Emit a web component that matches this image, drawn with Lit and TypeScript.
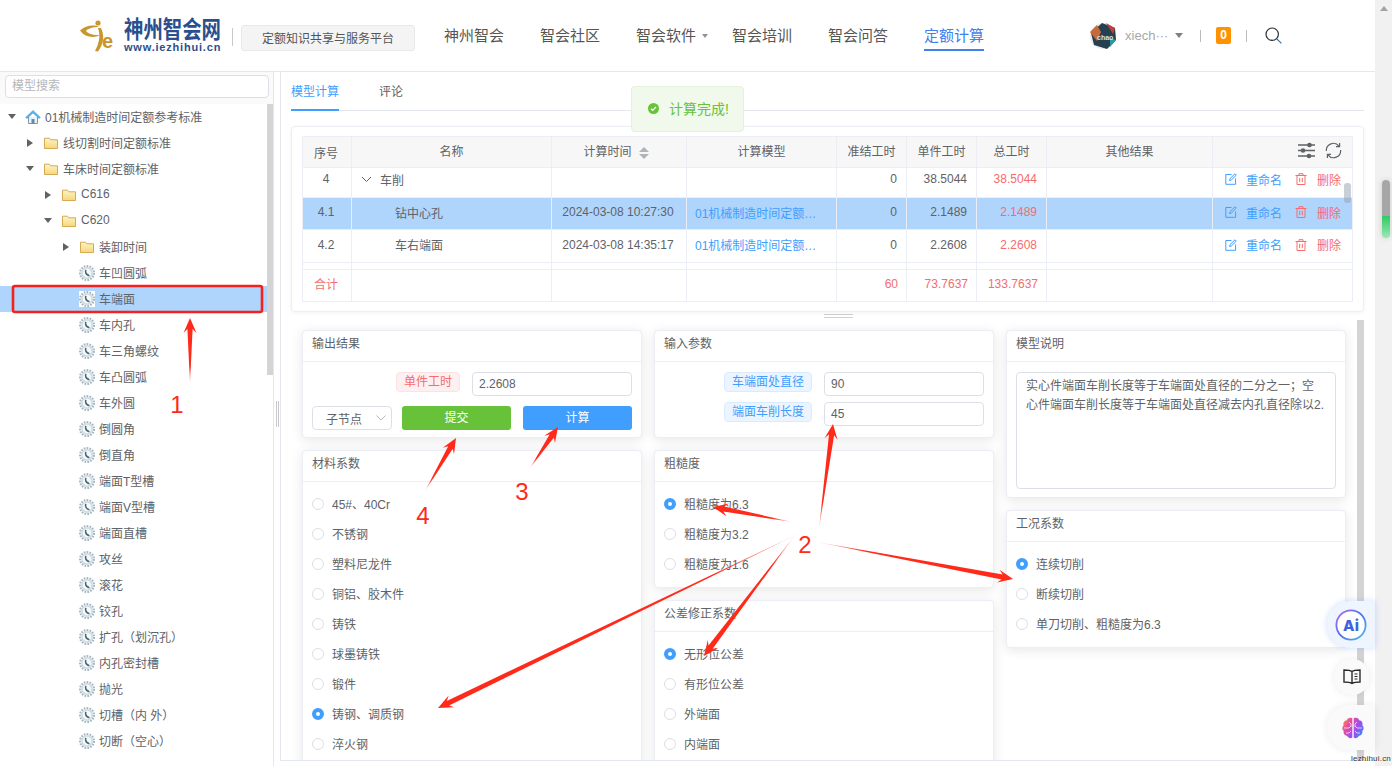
import { LitElement, html, css, svg } from "lit";
import { customElement } from "lit/decorators.js";

type Node = { l: number; t: "home" | "folder" | "model"; a?: "open" | "closed"; n: string; sel?: boolean };

const TREE: Node[] = [
  { l: 0, t: "home", a: "open", n: "01机械制造时间定额参考标准" },
  { l: 1, t: "folder", a: "closed", n: "线切割时间定额标准" },
  { l: 1, t: "folder", a: "open", n: "车床时间定额标准" },
  { l: 2, t: "folder", a: "closed", n: "C616" },
  { l: 2, t: "folder", a: "open", n: "C620" },
  { l: 3, t: "folder", a: "closed", n: "装卸时间" },
  ...[
    "车凹圆弧", "车端面", "车内孔", "车三角螺纹", "车凸圆弧", "车外圆", "倒圆角", "倒直角", "端面T型槽", "端面V型槽",
    "端面直槽", "攻丝", "滚花", "铰孔", "扩孔（划沉孔）", "内孔密封槽", "抛光", "切槽（内 外）", "切断（空心）",
  ].map((n) => ({ l: 3, t: "model" as const, n, sel: n === "车端面" })),
];

const MATERIAL = ["45#、40Cr", "不锈钢", "塑料尼龙件", "铜铝、胶木件", "铸铁", "球墨铸铁", "锻件", "铸钢、调质钢", "淬火钢"];
const ROUGH = ["粗糙度为6.3", "粗糙度为3.2", "粗糙度为1.6"];
const TOL = ["无形位公差", "有形位公差", "外端面", "内端面"];
const WORK = ["连续切削", "断续切削", "单刀切削、粗糙度为6.3"];

const ARROWS: [number, number, number, number][] = [
  [190, 384, 190, 318],
  [792, 522, 713, 507],
  [819, 529, 833, 424],
  [817, 542, 1013, 579],
  [795, 535, 704, 656],
  [802, 532, 438, 708],
  [530, 468, 558, 427],
  [425, 491, 456, 438],
];

function arrowPoints(x1: number, y1: number, x2: number, y2: number) {
  const dx = x2 - x1, dy = y2 - y1;
  const len = Math.hypot(dx, dy);
  const ux = dx / len, uy = dy / len, px = -uy, py = ux;
  const at = (d: number, w: number) => `${(x1 + ux * d + px * w).toFixed(1)},${(y1 + uy * d + py * w).toFixed(1)}`;
  const h = 13, sw = 2.6, hw = 6.5;
  return [at(0, 0), at(len - h + 2, sw), at(len - h - 2, hw), at(len, 0), at(len - h - 2, -hw), at(len - h + 2, -sw)].join(" ");
}

const modelIcon = html`<svg class="ic" viewBox="0 0 16 16">
  <circle cx="8" cy="8" r="6.9" fill="none" stroke="#a3b6c2" stroke-width="2.2" stroke-dasharray="1.7 1.2" />
  <circle cx="8" cy="8" r="6" fill="#cfdce3" />
  <circle cx="8" cy="8" r="4.3" fill="#f6f9fa" />
  <path d="M6.8 4.9c-.7 2.4.4 4.8 3.6 5.8" fill="none" stroke="#4b6375" stroke-width="1.5" />
</svg>`;

const folderIcon = html`<svg class="ic" viewBox="0 0 16 16">
  <defs><linearGradient id="fg" x1="0" y1="0" x2="0" y2="1"><stop offset="0" stop-color="#fdf4c4" /><stop offset="1" stop-color="#f5d77c" /></linearGradient></defs>
  <path d="M1.5 13.5V3.2h5l1.3 1.6h6.7v8.7z" fill="url(#fg)" stroke="#d6aa55" stroke-width="1" />
</svg>`;

const homeIcon = html`<svg class="ic" viewBox="0 0 16 16">
  <path d="M3.5 8v6.5h9V8" fill="#e8f3fb" stroke="#7d98ad" stroke-width="1" />
  <rect x="6.5" y="10" width="3" height="4.5" fill="#6b8aa0" />
  <path d="M.6 8.4 8 1.4l7.4 7-1.4 1L8 4 2 9.4z" fill="#5cb2ec" stroke="#3f96d6" stroke-width=".5" />
</svg>`;

const editIcon = html`<svg class="act" viewBox="0 0 12 12" fill="none" stroke="currentColor" stroke-width="1">
  <path d="M6.5 1.5H.8v9.8h9.8V5.5" /><path d="M4.6 7.5 5 5.6 10 .8l1.3 1.3-5 4.9z" />
</svg>`;
const trashIcon = html`<svg class="act" viewBox="0 0 12 12" fill="none" stroke="currentColor" stroke-width="1">
  <path d="M.5 2.5h11M4 2.5V.7h4v1.8M2 2.5v9h8v-9M4.7 4.8v4.4M7.3 4.8v4.4" />
</svg>`;

const radio = (label: string, on: boolean) => html`<div class="radio"><i class=${on ? "dot on" : "dot"}></i><span>${label}</span></div>`;

@customElement("app-root")
export class AppRoot extends LitElement {
  static styles = css`
    :host { display: block; width: 1392px; height: 766px; position: relative; overflow: hidden; background: #fff;
      font-family: "Liberation Sans", "Noto Sans CJK SC", sans-serif; font-size: 12px; color: #606266; }
    * { box-sizing: border-box; }
    .page { display: flex; height: 766px; }
    .col { width: 1375px; display: flex; flex-direction: column; }
    .pagebar { width: 17px; background: #f1f1f1; display: flex; justify-content: center; padding-top: 6px; }
    .pagebar i { width: 0; height: 0; border: 4px solid transparent; border-top: 0; border-bottom: 5px solid #a3a3a3; }

    header { height: 72px; flex: none; border-bottom: 1px solid #e4e7ed; display: flex; align-items: center; padding-left: 80px; }
    .logo { width: 142px; height: 40px; display: flex; gap: 2px; margin-top: -1px; }
    .logo svg { width: 42px; height: 36px; flex: none; margin-top: 3px; }
    .lt { display: flex; flex-direction: column; width: 98px; }
    .lt b { font: 700 19.4px/20px "Noto Sans CJK SC", sans-serif; color: #2b4f8c; transform: scaleY(1.25); transform-origin: top; white-space: nowrap; height: 20px; margin-bottom: 7px; }
    .lt em { font: 700 11px/10px "Liberation Sans", sans-serif; color: #2b4f8c; letter-spacing: .8px; white-space: nowrap; font-style: normal; }
    .vs { width: 1px; height: 18px; background: #c8c8c8; margin: 3px 8px 0 10px; }
    .slogan { width: 174px; height: 26px; background: #f4f4f5; border: 1px solid #e9e9eb; border-radius: 3px; display: flex; align-items: center; justify-content: center; margin-top: 4px; color: #555; }
    nav { display: flex; gap: 36px; margin-left: 29px; }
    nav a { font-size: 15px; color: #555; line-height: 22px; position: relative; height: 30px; padding-top: 4px; }
    nav a.on { color: #4080f0; border-bottom: 2px solid #4080f0; }
    nav a.has::after { content: ""; position: absolute; right: -12px; top: 13px; border: 3.5px solid transparent; border-top: 4px solid #909399; border-bottom: 0; }
    .user { display: flex; align-items: center; margin-left: 106px; color: #a8a8a8; font-size: 13px; }
    .user svg.av { width: 26px; height: 26px; }
    .uname { margin-left: 9px; width: 42px; }
    .caret { width: 0; height: 0; border: 4px solid transparent; border-top: 5px solid #808080; border-bottom: 0; margin-left: 8px; }
    .sep { width: 1px; height: 12px; background: #bbb; margin-left: 17px; }
    .sep.b { margin-left: 15px; }
    .badge { width: 15px; height: 17px; background: #ff9200; color: #fff; font: 700 12px/17px "Liberation Sans", sans-serif; text-align: center; border-radius: 2px; margin-left: 15px; }
    .search { width: 17px; height: 17px; margin-left: 18px; }

    .body { flex: 1; min-height: 0; display: flex; }
    aside { width: 273px; flex: none; display: flex; flex-direction: column; position: relative; }
    .sb { height: 32px; background: #fafafa; padding: 3px 4px 0 5px; flex: none; }
    .sb div { height: 23px; border: 1px solid #dcdfe6; border-radius: 4px; background: #fff; color: #b4b6bb; padding-left: 6px; line-height: 21px; }
    .tree { flex: 1; min-height: 0; overflow: hidden; }
    .row { height: 26px; display: flex; align-items: center; width: 267px; color: #606266; white-space: nowrap; padding-bottom: 1px; }
    .row.sel { background: #afd5fd; }
    .row.sel .ic { background: #fff; }
    .row .lat { margin-top: -2px; }
    .tri { width: 18px; display: flex; justify-content: center; flex: none; }
    .tri i { width: 0; height: 0; border: 4px solid transparent; }
    .tri i.closed { border-left: 6px solid #606266; border-right: 0; }
    .tri i.open { border-top: 5px solid #606266; border-bottom: 0; }
    .ic { width: 16px; height: 16px; margin: 0 4px; flex: none; }
    .tree-thumb { position: absolute; left: 267px; top: 32px; width: 6px; height: 271px; background: #d4d4d6; }
    .split { width: 7px; flex: none; border-left: 1px solid #e4e7ed; display: flex; align-items: center; justify-content: center; }
    .split i { width: 3px; height: 26px; border-left: 1px solid #c8c8c8; border-right: 1px solid #c8c8c8; margin-top: -10px; }

    section { width: 1095px; height: 689px; border-left: 1px solid #e4e7ed; border-bottom: 1px solid #e4e7ed; padding: 0 11px 0 10px; display: flex; flex-direction: column; position: relative; }
    .tabs { height: 39px; flex: none; border-bottom: 1px solid #e4e7ed; display: flex; gap: 40px; }
    .tabs a { height: 38px; line-height: 40px; }
    .tabs a.on { color: #409eff; border-bottom: 2px solid #409eff; height: 39px; }

    .tcard { height: 186px; flex: none; margin-top: 15px; border: 1px solid #ebeef5; border-radius: 4px; padding: 9px 11px 0 10px; box-shadow: 0 1px 4px rgba(0, 0, 0, .05); position: relative; }
    table { width: 1050px; border-collapse: collapse; table-layout: fixed; }
    td, th { border: 1px solid #ebeef5; padding: 0 9px; font-weight: 400; overflow: hidden; white-space: nowrap; text-overflow: ellipsis; }
    td:first-child, th:first-child { padding: 0 10px 0 8px; }
    th { background: #f7f7f8; height: 31px; text-align: center; color: #606266; padding-bottom: 3px; }
    td.c { text-align: center; }
    td.d { text-align: center; padding-right: 11px; }
    td.r { text-align: right; }
    td.rd { color: #f56c6c; }
    td.lk { color: #409eff; padding: 0 12px 0 8px; }
    td.n { padding-left: 43px; }
    tr.s td { background: #afd5fd; }
    tr.r30 td { height: 30px; padding-bottom: 7px; }
    tr.r32 td { height: 32px; padding-bottom: 3px; }
    tr.r33 td { height: 33px; padding-bottom: 3px; }
    tr.gap td { height: 7px; padding: 0; }
    tfoot td, tfoot td:first-child { height: 32px; color: #f56c6c; padding-bottom: 4px; }
    tfoot td.r { padding-right: 8px; }
    .nm { display: flex; align-items: center; }
    .nm svg { width: 11px; height: 7px; margin-right: 8px; flex: none; }
    .sort { display: inline-flex; flex-direction: column; gap: 2px; vertical-align: middle; margin: 0 6px 0 7px; }
    .sort i { width: 0; height: 0; border: 5px solid transparent; border-bottom: 5px solid #b0b3b9; border-top: 0; }
    .sort i + i { border-top: 5px solid #b0b3b9; border-bottom: 0; }
    .tools { display: flex; justify-content: flex-end; gap: 10px; padding-right: 2px; margin-right: -1px; }
    .tools svg { width: 17px; height: 17px; }
    .acts { display: flex; align-items: center; padding-left: 3px; }
    td.ac { padding: 0 0 0 9px; }
    .act { width: 12px; height: 12px; flex: none; }
    .blue { color: #409eff; display: flex; align-items: center; gap: 9px; margin-right: 13px; }
    .redg { color: #f56c6c; display: flex; align-items: center; gap: 10px; }
    .tthumb { position: absolute; right: 12px; top: 56px; width: 7px; height: 20px; background: rgba(150, 160, 175, .5); border-radius: 3px; }

    .handle { height: 7px; flex: none; display: flex; justify-content: center; padding-top: 2px; margin-left: 22px; }
    .handle i { width: 29px; height: 4px; border-top: 1px solid #d0d0d0; border-bottom: 1px solid #d0d0d0; }
    .panels { flex: 1; min-height: 0; position: relative; overflow: hidden; display: flex; gap: 12px; padding: 11px 0 0 11px; }
    .pc { width: 340px; flex: none; display: flex; flex-direction: column; gap: 12px; }
    .card { background: #fff; border: 1px solid #ebeef5; border-radius: 4px; box-shadow: 0 2px 12px rgba(0, 0, 0, .1); flex: none; }
    .card h4 { margin: 0; height: 31px; line-height: 26px; padding-left: 9px; border-bottom: 1px solid #ebeef5; font-weight: 400; font-size: 12px; color: #606266; }
    .rb { padding: 7px 0 8px 9px; }
    .radio { height: 30px; display: flex; align-items: center; gap: 8px; padding-bottom: 1px; }
    .dot { width: 12px; height: 12px; border-radius: 50%; border: 1px solid #dcdfe6; background: #fff; flex: none; }
    .dot.on { background: #fff; border: 4px solid #409eff; }
    .pthumb { position: absolute; right: 0; top: 1px; width: 7px; height: 440px; background: #d4d4d6; }

    .fb { padding: 10px 9px 0; height: 75px; }
    .fr { display: flex; justify-content: flex-end; align-items: flex-start; margin-bottom: 6px; }
    .inp { width: 160px; height: 24px; border: 1px solid #dcdfe6; border-radius: 4px; background: #fff; line-height: 22px; padding-left: 6px; font-size: 12px; color: #606266; }
    .tag { height: 20px; line-height: 18px; padding: 0 7px; border-radius: 4px; font-size: 12px; margin-right: 12px; border: 1px solid; }
    .tag.red { background: #fef0f0; border-color: #fde2e2; color: #f56c6c; }
    .tag.bl { background: #ecf5ff; border-color: #d9ecff; color: #409eff; }
    .fr2 { display: flex; gap: 12px; margin-top: 10px; }
    .pick { width: 80px; height: 24px; border: 1px solid #dcdfe6; border-radius: 4px; display: flex; align-items: center; padding-left: 13px; margin-right: -2px; }
    .pick svg { width: 10px; height: 6px; margin-left: 14px; }
    .btn { width: 109px; height: 24px; border-radius: 3px; color: #fff; text-align: center; line-height: 24px; }
    .btn.g { background: #67c23a; }
    .btn.b { background: #409eff; }
    .desc { height: 135px; overflow: hidden; padding: 10px 9px 0; }
    .ta { height: 117px; border: 1px solid #dcdfe6; border-radius: 4px; padding: 4px 9px; line-height: 18.5px; white-space: nowrap; }

    .toast { position: absolute; left: 631px; top: 86px; width: 113px; height: 46px; background: #f0f9eb; border: 1px solid #e1f3d8; border-radius: 4px; display: flex; align-items: center; padding: 0 0 2px 16px; gap: 10px; color: #67c23a; font-size: 14px; white-space: nowrap; }
    .toast svg { width: 11px; height: 11px; flex: none; }
    .overlay { position: absolute; inset: 0; width: 1392px; height: 766px; pointer-events: none; }
    .overlay text { font: 24px "Liberation Sans", sans-serif; fill: #ff2a1a; text-anchor: middle; }
    .wheel { position: absolute; left: 1382px; top: 180px; width: 8px; height: 58px; border-radius: 4px; overflow: hidden; background: linear-gradient(#a6a6a6 0 62%, #2ecb63 62%, #9be8b4 100%); box-shadow: 0 0 6px rgba(0, 0, 0, .15); }
    .fab { position: absolute; background: #fafafa; box-shadow: 0 0 8px rgba(0, 0, 0, .08); display: flex; align-items: center; }
    .fab.ai { left: 1327px; top: 601px; width: 48px; height: 47px; border-radius: 24px 0 0 24px; background: #eff5ff; padding-left: 8px; box-shadow: 0 0 6px rgba(90, 140, 250, .3); }
    .fab.bk { left: 1334px; top: 659px; width: 36px; height: 36px; border-radius: 50%; justify-content: center; }
    .fab.br { left: 1327px; top: 705px; width: 48px; height: 45px; border-radius: 23px 0 0 23px; padding-left: 14px; }
    .wm { position: absolute; left: 1351px; top: 753px; font-size: 8px; letter-spacing: .2px; color: #333; line-height: 11px; }
  `;

  private tree() {
    return TREE.map(
      (r) => html`<div class=${r.sel ? "row sel" : "row"} style="padding-left:${3 + 18 * r.l}px">
        <span class="tri">${r.a ? html`<i class=${r.a}></i>` : ""}</span>
        ${r.t === "home" ? homeIcon : r.t === "folder" ? folderIcon : modelIcon}
        <span class=${/^[\x00-\x7f]+$/.test(r.n) ? "lat" : ""}>${r.n}</span>
      </div>`
    );
  }

  private actions() {
    return html`<div class="acts">
      <span class="blue">${editIcon}<span>重命名</span></span>
      <span class="redg">${trashIcon}<span>删除</span></span>
    </div>`;
  }

  private rows() {
    const link = "01机械制造时间定额参考标准";
    return html`
      <tr class="r30"><td class="c">4</td>
        <td><div class="nm"><svg viewBox="0 0 11 7" fill="none" stroke="#606266"><path d="M1 1l4.5 4.5L10 1" /></svg>车削</div></td>
        <td></td><td></td><td class="r">0</td><td class="r">38.5044</td><td class="r rd">38.5044</td><td></td><td class="ac">${this.actions()}</td></tr>
      <tr class="r32 s"><td class="c">4.1</td><td class="n">钻中心孔</td><td class="d">2024-03-08 10:27:30</td><td class="lk">${link}</td>
        <td class="r">0</td><td class="r">2.1489</td><td class="r rd">2.1489</td><td></td><td class="ac">${this.actions()}</td></tr>
      <tr class="r33"><td class="c">4.2</td><td class="n">车右端面</td><td class="d">2024-03-08 14:35:17</td><td class="lk">${link}</td>
        <td class="r">0</td><td class="r">2.2608</td><td class="r rd">2.2608</td><td></td><td class="ac">${this.actions()}</td></tr>
      <tr class="gap"><td></td><td></td><td></td><td></td><td></td><td></td><td></td><td></td><td></td></tr>`;
  }

  private overlay() {
    return svg`
      <defs>${ARROWS.map(
        (a, i) => svg`<linearGradient id=${"ag" + i} gradientUnits="userSpaceOnUse" x1=${a[0]} y1=${a[1]} x2=${a[2]} y2=${a[3]}>
          <stop offset="0" stop-color="#ff2a1a" stop-opacity=".15"></stop><stop offset=".25" stop-color="#ff2a1a"></stop></linearGradient>`
      )}</defs>
      <rect x="13" y="286" width="249" height="26" rx="2" fill="none" stroke="#f5211c" stroke-width="2.6"></rect>
      ${ARROWS.map((a, i) => svg`<polygon points=${arrowPoints(a[0], a[1], a[2], a[3])} fill=${`url(#ag${i})`}></polygon>`)}
      <text x="177" y="413">1</text><text x="805" y="553">2</text><text x="522" y="500">3</text><text x="423" y="524">4</text>`;
  }

  render() {
    return html`<div class="page">
        <div class="col">
          <header>
            <div class="logo">
              <svg viewBox="0 0 42 36">
                <path d="M0 12.5C6 7 14 6.5 19 9 13 9 8 10.5 6 13c2.5 3 8 4.5 14 4-6 3.5-15 2.5-20-4.500z" fill="#c8952f" />
                <circle cx="18" cy="5" r="2.6" fill="#c8952f" />
                <path d="M18 10c2.5 7 1.5 15-3 23l3 .5c6-8 6.5-16 3-23.500z" fill="#c8952f" />
                <text x="22" y="30" font-family="Liberation Sans, sans-serif" font-weight="700" font-size="20" fill="#c8952f">e</text>
              </svg>
              <div class="lt"><b>神州智会网</b><em>www.iezhihui.cn</em></div>
            </div>
            <div class="vs"></div>
            <div class="slogan">定额知识共享与服务平台</div>
            <nav>
              <a>神州智会</a><a>智会社区</a><a class="has">智会软件</a><a>智会培训</a><a>智会问答</a><a class="on">定额计算</a>
            </nav>
            <div class="user">
              <svg class="av" viewBox="0 0 26 26">
                <circle cx="13" cy="13" r="13" fill="#e9edef" />
                <path d="M1 10 12 0l13 5 1 12-9 9-13-4z" fill="#27404f" />
                <path d="M0 9l7-7 4 7-4 9z" fill="#c66a3a" />
                <path d="M16 0l9 5-2 6z" fill="#b9423c" />
                <path d="M20 15l6 2-6 7z" fill="#2e97a6" />
                <text x="7" y="17" font-size="7" font-weight="700" fill="#cfe9ee" font-family="Liberation Sans, sans-serif">chao</text>
              </svg>
              <span class="uname">xiech···</span>
              <i class="caret"></i>
              <i class="sep"></i>
              <i class="badge">0</i>
              <i class="sep b"></i>
              <svg class="search" viewBox="0 0 17 17" fill="none" stroke="#333" stroke-width="1.2"><circle cx="7.2" cy="7.2" r="6.2" /><path d="M11.8 11.8 16.4 16.4" stroke="#3b6fb0" /></svg>
            </div>
          </header>
          <div class="body">
            <aside>
              <div class="sb"><div>模型搜索</div></div>
              <div class="tree">${this.tree()}</div>
              <div class="tree-thumb"></div>
            </aside>
            <div class="split"><i></i></div>
            <section>
              <div class="tabs"><a class="on">模型计算</a><a>评论</a></div>
              <div class="tcard">
                <table>
                  <colgroup><col width="49" /><col width="200" /><col width="135" /><col width="150" /><col width="70" /><col width="70" /><col width="70" /><col width="166" /><col width="140" /></colgroup>
                  <thead><tr>
                    <th>序号</th><th>名称</th><th>计算时间<span class="sort"><i></i><i></i></span></th><th>计算模型</th><th>准结工时</th><th>单件工时</th><th>总工时</th><th>其他结果</th>
                    <th><div class="tools">
                      <svg viewBox="0 0 17 17" fill="none" stroke="#5f6266" stroke-width="1.4"><path d="M0 3h17M0 8.5h17M0 14h17" /><circle cx="11.5" cy="3" r="1.6" fill="#5f6266" /><circle cx="5" cy="8.5" r="1.6" fill="#5f6266" /><circle cx="11" cy="14" r="1.6" fill="#5f6266" /></svg>
                      <svg viewBox="0 0 17 17" fill="none" stroke="#5f6266" stroke-width="1.2"><path d="M1.4 9A7 7 0 0 1 14 4.2M15.6 8A7 7 0 0 1 3 12.8" /><path d="M14.6 1v3.6H11M2.4 16v-3.6H6" /></svg>
                    </div></th>
                  </tr></thead>
                  <tbody>${this.rows()}</tbody>
                  <tfoot><tr><td class="c">合计</td><td></td><td></td><td></td><td class="r">60</td><td class="r">73.7637</td><td class="r">133.7637</td><td></td><td></td></tr></tfoot>
                </table>
                <div class="tthumb"></div>
              </div>
              <div class="handle"><i></i></div>
              <div class="panels">
                <div class="pc">
                  <div class="card"><h4>输出结果</h4>
                    <div class="fb">
                      <div class="fr"><span class="tag red">单件工时</span><div class="inp">2.2608</div></div>
                      <div class="fr2">
                        <div class="pick">子节点<svg viewBox="0 0 10 6" fill="none" stroke="#b4b6bb"><path d="M.5.5 5 5 9.5.5" /></svg></div>
                        <div class="btn g">提交</div><div class="btn b">计算</div>
                      </div>
                    </div>
                  </div>
                  <div class="card"><h4>材料系数</h4><div class="rb">${MATERIAL.map((m) => radio(m, m === "铸钢、调质钢"))}</div></div>
                </div>
                <div class="pc">
                  <div class="card"><h4>输入参数</h4>
                    <div class="fb">
                      <div class="fr"><span class="tag bl">车端面处直径</span><div class="inp">90</div></div>
                      <div class="fr"><span class="tag bl">端面车削长度</span><div class="inp">45</div></div>
                    </div>
                  </div>
                  <div class="card"><h4>粗糙度</h4><div class="rb">${ROUGH.map((m, i) => radio(m, i === 0))}</div></div>
                  <div class="card"><h4>公差修正系数</h4><div class="rb">${TOL.map((m, i) => radio(m, i === 0))}</div></div>
                </div>
                <div class="pc">
                  <div class="card"><h4>模型说明</h4>
                    <div class="desc"><div class="ta">实心件端面车削长度等于车端面处直径的二分之一；空<br />心件端面车削长度等于车端面处直径减去内孔直径除以2.</div></div>
                  </div>
                  <div class="card"><h4>工况系数</h4><div class="rb">${WORK.map((m, i) => radio(m, i === 0))}</div></div>
                </div>
                <div class="pthumb"></div>
              </div>
            </section>
          </div>
        </div>
        <div class="pagebar"><i></i></div>
      </div>
      <div class="toast">
        <svg viewBox="0 0 12 12"><circle cx="6" cy="6" r="6" fill="#67c23a" /><path d="M3.2 6.2 5.2 8 8.8 4.2" fill="none" stroke="#fff" stroke-width="1.4" /></svg>
        <span>计算完成!</span>
      </div>
      <div class="wheel"></div>
      <div class="fab ai">
        <svg width="32" height="32" viewBox="0 0 32 32">
          <defs><linearGradient id="aig" x1="0" y1="0" x2="1" y2="1"><stop offset="0" stop-color="#b06cf0" /><stop offset=".5" stop-color="#4f6ff0" /><stop offset="1" stop-color="#4fc0f0" /></linearGradient></defs>
          <circle cx="16" cy="16" r="14.6" fill="#fff" stroke="url(#aig)" stroke-width="1.8" />
          <text x="16" y="21.5" text-anchor="middle" font-family="Inter, sans-serif" font-weight="800" font-size="15" fill="#3f62dc">Ai</text>
        </svg>
      </div>
      <div class="fab bk">
        <svg width="18" height="16" viewBox="0 0 18 16" fill="none" stroke="#2b2b2b" stroke-width="1.4"><path d="M9 2.5C7 1 4 1 1 1v12c3 0 6 0 8 1.5 2-1.5 5-1.5 8-1.5V1c-3 0-6 0-8 1.5zM9 2.5v12" /><path d="M11.5 5h3M11.5 7.5h3M11.5 10h3" stroke-width="1.1" /></svg>
      </div>
      <div class="fab br">
        <svg width="24" height="24" viewBox="0 0 24 24">
          <defs><linearGradient id="brg" x1="0" y1="0" x2="1" y2=".6"><stop offset="0" stop-color="#f5a13a" /><stop offset=".35" stop-color="#ec4aa0" /><stop offset=".7" stop-color="#a24cf0" /><stop offset="1" stop-color="#4f7cf5" /></linearGradient></defs>
          <path d="M11.3 2.2C8.5 1 6.3 2.3 5.8 4.3 3.2 4.6 1.8 7 2.6 9.2.9 10.8.9 13.6 2.7 15c-.6 2.5 1 4.6 3.4 4.8.8 2.2 3.5 3 5.2 1.8zM12.7 2.2c2.8-1.2 5-.1 5.5 2.1 2.6.3 4 2.7 3.2 4.9 1.7 1.6 1.7 4.4-.1 5.8.6 2.5-1 4.6-3.4 4.8-.8 2.2-3.500 3-5.200 1.800z" fill="url(#brg)" />
          <path d="M3 12h5l2-2M8 6l2 2v3M5 17h3l2-2M21 12h-5l-2-2M16 6l-2 2v3M19 17h-3l-2-2" fill="none" stroke="#fff" stroke-width=".7" />
        </svg>
      </div>
      <div class="wm">lezhihui.cn</div>
      <svg class="overlay" viewBox="0 0 1392 766">${this.overlay()}</svg>`;
  }
}
